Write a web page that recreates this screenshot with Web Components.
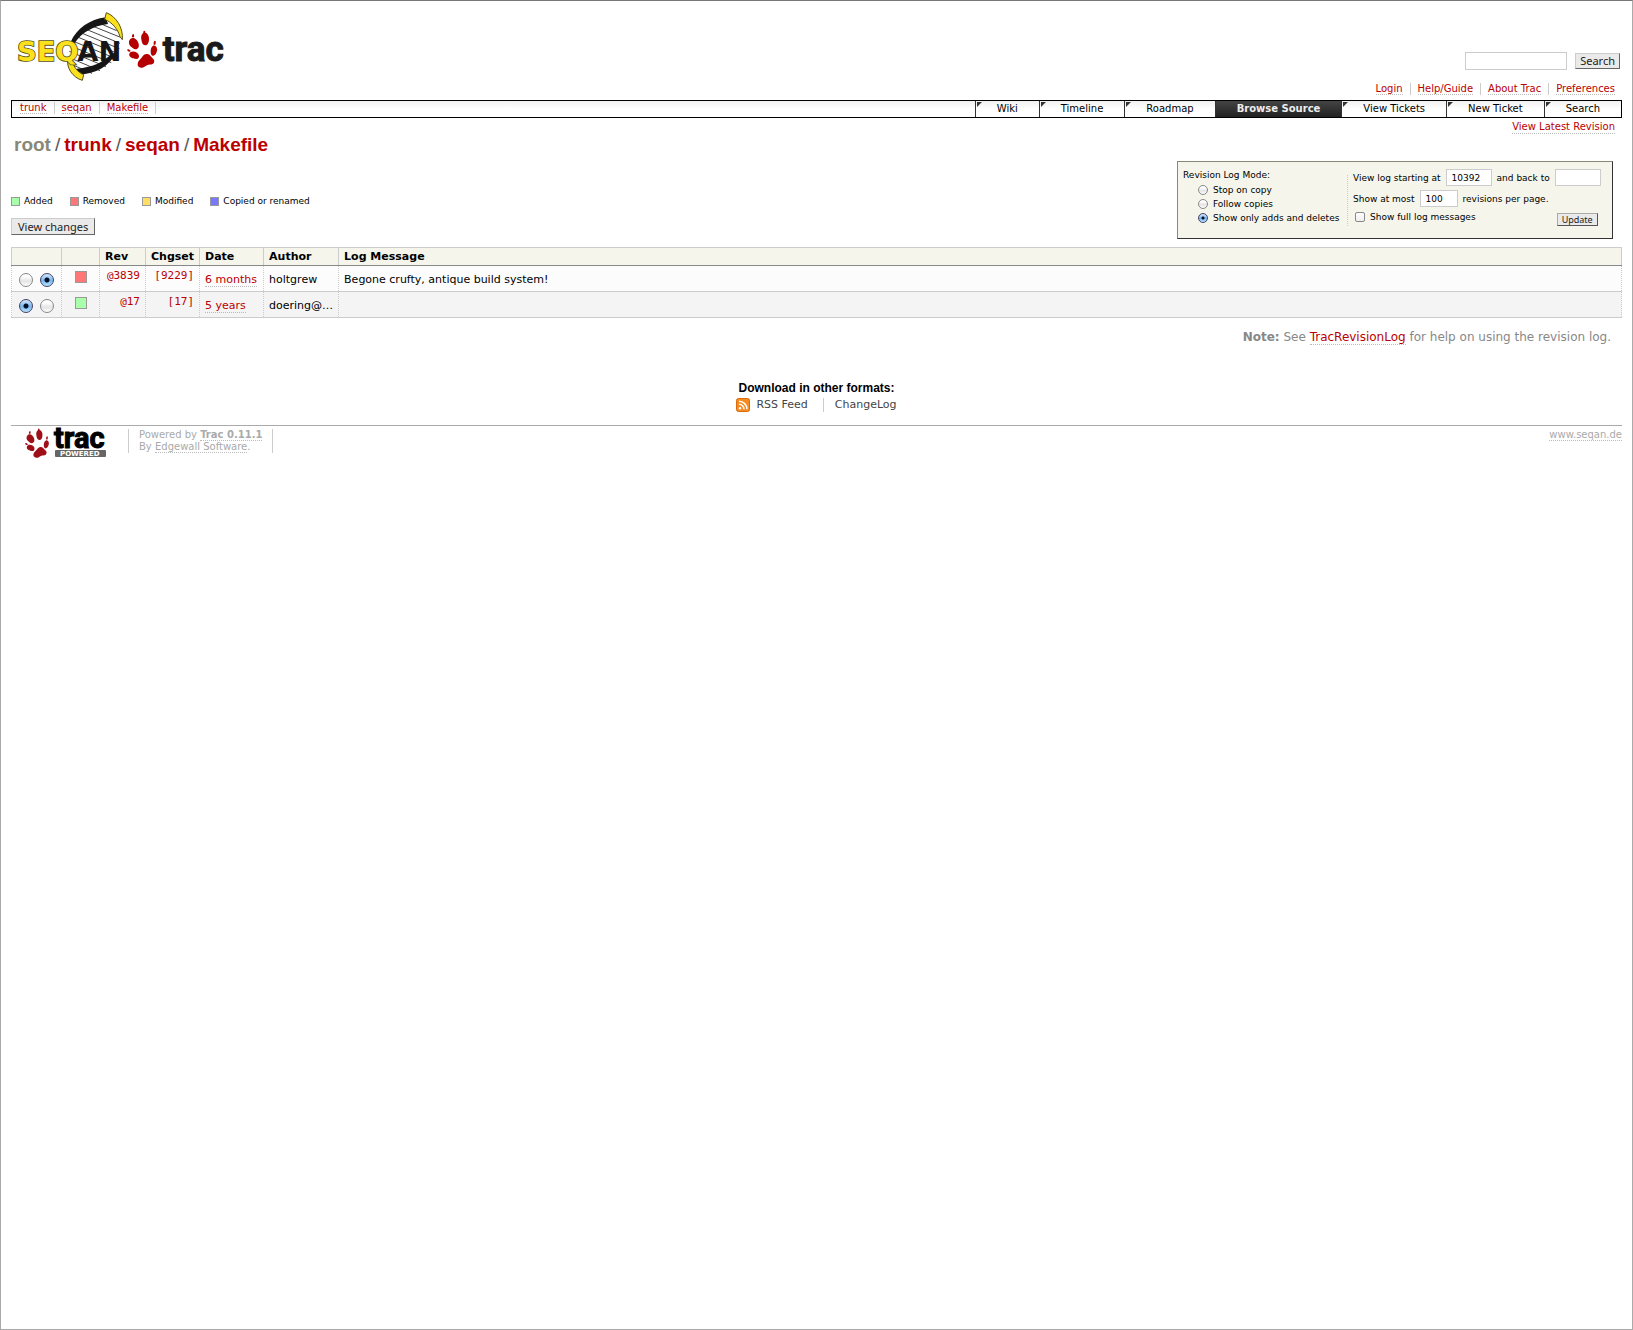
<!DOCTYPE html>
<html lang="en">
<head>
<meta charset="utf-8">
<title>Makefile (log) - SeqAn - Trac</title>
<style>
body { margin: 0; background: #fff; color: #000; font-family: Verdana, "DejaVu Sans", sans-serif; font-size: 11px; line-height: 14px; }
</style>
</head>
<body>
<trac-page>
  <page-banner slot="banner"></page-banner>
  <main-nav slot="nav"></main-nav>
  <log-heading slot="main"></log-heading>
  <log-tools slot="main"></log-tools>
  <revision-table slot="main"></revision-table>
  <help-note slot="main"></help-note>
  <alt-formats slot="main"></alt-formats>
  <page-footer slot="footer"></page-footer>
</trac-page>
<script>
const shared = `
  :host, * { box-sizing: border-box; }
  a { color: #b00; text-decoration: none; border-bottom: 1px dotted #bbb; }
  button { border: 1px solid; border-color: #ccc #666 #666 #ccc; background: #eaeaea; color: #222; padding: 0 6px; margin: 0; border-radius: 0; font: 11px/14px "Noto Sans", sans-serif; white-space: nowrap; }
  input { margin: 0; font: inherit; color: #000; }
  input[type=text] { border: 1px solid #ccc; background: #fff; border-radius: 0; padding: 0 5px; }
  input[type=radio] { appearance: none; flex: none; width: 10px; height: 10px; border: 1px solid #888; border-radius: 50%; background: linear-gradient(#fff 20%, #e4e4e4 60%, #fff); }
  input[type=radio]:checked { border-color: #446; background: radial-gradient(circle, #012 0 1px, transparent 2px), linear-gradient(#d4e8fc, #7ab4ee 55%, #b8e4ff); }
  ul { list-style: none; margin: 0; padding: 0; display: flex; }
`;
const paw = `<g class="paw">
  <path d="M387 130c-1-11 7-18 16-15 9 4 16 17 13 26-3 8-12 9-17 4-5-5-11-7-12-15z"/>
  <path d="M424 118c-2-12 3-20 10-20 9 0 14 10 13 22-1 11-6 17-12 16-7-1-10-8-11-18z"/>
  <path d="M452 154c0-10 6-19 12-17 7 2 9 11 6 19-3 9-9 13-13 11s-5-7-5-13z"/>
  <path d="M388 161c3-8 14-9 23-3 6 4 8 12 4 17-4 4-10 2-15 0-7-2-14-6-12-14z"/>
  <path d="M413 191c1-9 7-11 11-17 5-8 10-13 18-12 8 1 10 8 15 12 7 5 8 14 1 18-5 3-11 0-17 4-6 3-10 8-18 7-7-1-11-6-10-12z"/>
  <path d="M396 112c-1-5 2-10 4-10s3 5 2 10zM430 101c-1-5 0-9 3-9s4 4 3 9zM461 134c-1-6 1-12 4-12s3 6 1 12zM390 155c-5 1-9-3-8-6s6-1 10 3z"/>
</g>`;
const define = (name, css, html) => customElements.define(name, class extends HTMLElement {
  constructor() {
    super();
    this.attachShadow({ mode: 'open' }).innerHTML = `<style>${shared}${css}</style>${html}`;
  }
});

define('trac-page', `
  :host { display: block; min-height: 100vh; border: 1px solid #aaa; border-top-color: #777; padding: 0 10px; }
`, `<header><slot name="banner"></slot><slot name="nav"></slot></header>
<main><slot name="main"></slot></main>
<footer><slot name="footer"></slot></footer>`);

define('seqan-logo', `
  :host { display: block; }
  svg { display: block; width: 208px; height: 71px; overflow: visible; }
  .paw { fill: #b40000; }
  .word { font: bold 82px "DejaVu Sans", sans-serif; }
  .trac { font: bold 105px Roboto, sans-serif; fill: #1a1a1a; stroke: #1a1a1a; stroke-width: 3; }
`, `<svg viewBox="51 33 624 213" role="img" aria-label="SeqAn Trac">
  <path d="M316 54C270 62 232 88 217 124C202 154 204 186 216 206L240 222C285 218 320 196 344 158C362 128 366 104 352 86Z" fill="#fff"/>
  <path d="M290 66L350 92M272 76L362 112M254 86L360 130M242 98L358 146M230 110L352 160M220 124L344 174M212 138L334 188M208 154L318 200M206 172L300 212M212 192L276 220" stroke="#222" stroke-width="2.5"/>
  <path d="M318 52C268 58 230 86 212 126L224 130C244 98 278 78 324 72Z" fill="#161616"/>
  <path d="M236 224C288 222 328 198 348 160L336 160C312 186 280 202 230 206Z" fill="#161616"/>
  <path d="M319 38C350 50 370 84 367 119L360 110C353 86 336 67 314 58Z" fill="#fbe01c" stroke="#555116" stroke-width="3"/>
  <path d="M204 174C197 202 218 233 247 241L251 224C231 216 217 197 216 174Z" fill="#fbe01c" stroke="#555116" stroke-width="3"/>
  <text class="word" x="51" y="184" fill="#fbe01c" stroke="#555116" stroke-width="5" paint-order="stroke">SEQ</text>
  <text class="word" x="232" y="184" fill="#161616">AN</text>
  ${paw}
  <text class="trac" x="488" y="183">trac</text>
</svg>`);

define('page-banner', `
  :host { display: flex; justify-content: space-between; padding: 10px 0 0 6px; height: 99px; }
  .side { display: flex; flex-direction: column; align-items: flex-end; gap: 13px; padding-top: 41px; }
  form { display: flex; align-items: center; gap: 8px; padding-right: 2px; }
  form input[type=text] { width: 102px; height: 18px; }
  form button { padding: 0 4px; }
  ul { font-size: 10px; line-height: 12px; padding-right: 7px; }
  li { padding-left: 7px; margin-left: 7px; border-left: 1px solid #ccc; }
  li:first-child { border: 0; }
`, `<seqan-logo></seqan-logo>
<div class="side">
  <form onsubmit="return false"><input type="text" aria-label="Search"><button>Search</button></form>
  <nav aria-label="Account"><ul>
    <li><a href="#login">Login</a></li><li><a href="#guide">Help/Guide</a></li><li><a href="#about">About Trac</a></li><li><a href="#prefs">Preferences</a></li>
  </ul></nav>
</div>`);

define('main-nav', `
  :host { display: flex; justify-content: space-between; border: 1px solid #000; background: linear-gradient(#f0f0f0, #fff 50%); font-size: 10px; line-height: 16px; }
  .trail { line-height: 12px; padding: 1px 0 0 1px; }
  .trail li { padding: 0 7px; border-right: 1px solid #ccc; }
  .tabs a { display: block; border: 0; border-left: 1px solid #333; padding: 0 21px; color: #000; background: linear-gradient(135deg, #333 3px, transparent 4px) 1px 1px / 5px 5px no-repeat; }
  .tabs a.active { color: #eee; font-weight: bold; background: linear-gradient(#444, #222); }
`, `<nav aria-label="Path"><ul class="trail"><li><a href="#trunk">trunk</a></li><li><a href="#seqan">seqan</a></li><li><a href="#makefile">Makefile</a></li></ul></nav>
<nav aria-label="Main"><ul class="tabs">
  <li><a href="#wiki">Wiki</a></li><li><a href="#timeline">Timeline</a></li><li><a href="#roadmap">Roadmap</a></li><li><a href="#browser" class="active">Browse Source</a></li><li><a href="#tickets">View Tickets</a></li><li><a href="#new">New Ticket</a></li><li><a href="#search">Search</a></li>
</ul></nav>`);

define('log-heading', `
  :host { display: block; }
  nav { display: flex; justify-content: flex-end; padding: 3px 7px 0 0; font-size: 10px; line-height: 12px; }
  h1 { margin: 0; padding-left: 3px; display: flex; gap: 4px; font: bold 19px/22px Arial, "Liberation Sans", sans-serif; color: #555; }
  h1 a { border: 0; }
  .sep { font-weight: normal; }
  .root { color: #887; }
`, `<nav aria-label="Context"><a href="#latest">View Latest Revision</a></nav>
<h1><a class="root" href="#root">root</a><span class="sep">/</span><a href="#trunk">trunk</a><span class="sep">/</span><a href="#seqan">seqan</a><span class="sep">/</span><a href="#makefile">Makefile</a></h1>`);

define('log-tools', `
  :host { display: flex; justify-content: space-between; align-items: flex-start; padding: 5px 9px 0 0; }
  .left { display: flex; flex-direction: column; align-items: flex-start; gap: 11px; padding-top: 34px; }
  .legend { gap: 17px; font-size: 9px; line-height: 12px; }
  .legend li { display: flex; align-items: center; gap: 4px; }
  .legend i { width: 9px; height: 9px; border: 1px solid #999; }
  .left button { line-height: 15px; }
  form { display: flex; width: 436px; height: 78px; padding: 7px 12px 12px 5px; border: 1px solid; border-color: #887 #333 #333 #887; background: #f5f5eb; font-size: 9px; line-height: 12px; }
  fieldset { border: 0; margin: 0; padding: 0; min-width: 0; }
  legend { padding: 0; }
  .mode { flex: none; width: 165px; border-right: 1px dotted #ccc; }
  .mode div { padding: 3px 0 0 15px; display: flex; flex-direction: column; gap: 2px; white-space: nowrap; }
  .mode label { display: flex; align-items: center; gap: 5px; }
  .range { flex: 1; padding-left: 5px; display: flex; flex-direction: column; gap: 4px; white-space: nowrap; }
  .row { display: flex; align-items: center; gap: 5px; }
  .row input[type=text] { width: 46px; height: 17px; }
  .row input.short { width: 38px; }
  .last { height: 16px; justify-content: space-between; align-items: flex-start; }
  .last label { display: flex; align-items: center; gap: 5px; }
  input[type=checkbox] { appearance: none; width: 10px; height: 10px; margin-left: 2px; border: 1px solid #888; border-radius: 2px; background: linear-gradient(#fff, #eee); }
  .last button { align-self: flex-end; font-size: 9px; line-height: 11px; padding: 0 4px; margin-right: 3px; border-color: #aaa #555 #555 #aaa; }
`, `<div class="left">
  <ul class="legend">
    <li><i style="background:#afa"></i>Added</li><li><i style="background:#f77"></i>Removed</li><li><i style="background:#fd6"></i>Modified</li><li><i style="background:#77f"></i>Copied or renamed</li>
  </ul>
  <button type="button">View changes</button>
</div>
<form onsubmit="return false">
  <fieldset class="mode"><legend>Revision Log Mode:</legend>
    <div>
      <label><input type="radio" name="mode">Stop on copy</label>
      <label><input type="radio" name="mode">Follow copies</label>
      <label><input type="radio" name="mode" checked>Show only adds and deletes</label>
    </div>
  </fieldset>
  <div class="range">
    <div class="row"><label for="from">View log starting at</label><input type="text" id="from" value="10392"><label for="to">and back to</label><input type="text" id="to"></div>
    <div class="row"><label for="limit">Show at most</label><input type="text" class="short" id="limit" value="100"><span>revisions per page.</span></div>
    <div class="row last"><label><input type="checkbox">Show full log messages</label><button>Update</button></div>
  </div>
</form>`);

define('revision-table', `
  :host { display: block; padding-top: 8px; }
  table { width: 100%; border-collapse: collapse; font-size: 11px; line-height: 14px; }
  th { text-align: left; background: #f5f5eb; border: 1px solid #ccc; border-bottom-color: #888; padding: 2px 5px 1px; height: 18px; }
  td { border: 1px solid #ccc; border-left: 1px dotted #ccc; border-right: 1px dotted #ccc; padding: 2px 5px 0; height: 26px; white-space: nowrap; background: #fcfcfc; }
  tr:last-child td { background: #f4f4f4; }
  .diff { width: 50px; } .change { width: 38px; } .rev { width: 46px; } .set { width: 54px; } .age { width: 64px; } .author { width: 74px; }
  .pair { display: flex; gap: 7px; padding: 4px 2px; }
  .pair input { width: 14px; height: 14px; }
  .pair input:checked { background: radial-gradient(circle, #012 0 2px, transparent 3px), linear-gradient(#d4e8fc, #7ab4ee 55%, #b8e4ff); }
  .mono { font-family: "DejaVu Sans Mono", monospace; text-align: right; vertical-align: top; }
  .mono a { border: 0; }
  td.mono { padding-top: 3px; }
  td.change { vertical-align: top; padding-top: 5px; }
  td.change i { display: block; width: 12px; height: 12px; margin: 0 auto; border: 1px solid #999; }
`, `<table>
  <thead><tr><th class="diff"></th><th class="change"></th><th class="rev">Rev</th><th class="set">Chgset</th><th class="age">Date</th><th class="author">Author</th><th>Log Message</th></tr></thead>
  <tbody>
    <tr><td><div class="pair"><input type="radio" name="old" aria-label="From 3839"><input type="radio" name="new" aria-label="To 3839" checked></div></td><td class="change"><i style="background:#f77"></i></td><td class="mono"><a href="#r3839">@3839</a></td><td class="mono"><a href="#c9229">[9229]</a></td><td><a href="#t1">6 months</a></td><td>holtgrew</td><td>Begone crufty, antique build system!</td></tr>
    <tr><td><div class="pair"><input type="radio" name="old" aria-label="From 17" checked><input type="radio" name="new" aria-label="To 17"></div></td><td class="change"><i style="background:#afa"></i></td><td class="mono"><a href="#r17">@17</a></td><td class="mono"><a href="#c17">[17]</a></td><td><a href="#t2">5 years</a></td><td>doering@…</td><td></td></tr>
  </tbody>
</table>`);

define('help-note', `
  :host { display: block; padding: 11px 11px 0 0; text-align: right; font-size: 12px; line-height: 16px; color: #888; }
  p { margin: 0; }
`, `<p><strong>Note:</strong> See <a href="#help">TracRevisionLog</a> for help on using the revision log.</p>`);

define('alt-formats', `
  :host { display: flex; flex-direction: column; align-items: center; padding: 35px 0 13px; }
  h3 { margin: 0; font: bold 12px/16px Arial, "Liberation Sans", sans-serif; }
  ul { line-height: 14px; padding-top: 2px; }
  li + li { border-left: 1px solid #ccc; margin-left: 15px; padding-left: 11px; }
  a { color: #444; border: 0; display: flex; align-items: center; gap: 6px; }
  svg { width: 14px; height: 14px; }
`, `<h3>Download in other formats:</h3>
<ul><li><a href="#rss"><svg viewBox="0 0 14 14" aria-hidden="true"><rect x=".5" y=".5" width="13" height="13" rx="2" fill="#f68b1f" stroke="#d96b10"/><circle cx="4" cy="10.3" r="1.2" fill="#fff"/><path d="M3 6.2a5 5 0 0 1 5 5M3 3.3a8 8 0 0 1 8 8" fill="none" stroke="#fff" stroke-width="1.5"/></svg>RSS Feed</a></li><li><a href="#changelog">ChangeLog</a></li></ul>`);

define('page-footer', `
  :host { display: flex; align-items: flex-start; border-top: 1px solid #aaa; padding-top: 3px; font-size: 10px; line-height: 12px; color: #aaa; }
  a { color: #aaa; }
  p { margin: 0; }
  .logo { border: 0; margin: 0 22px 0 13px; }
  svg { display: block; width: 82px; height: 30px; overflow: visible; }
  .paw { fill: #9f0f17; }
  .trac { font: bold 29px Roboto, sans-serif; stroke: #000; }
  .powered { font: bold 7px "DejaVu Sans", sans-serif; fill: #fff; }
  .by { padding: 0 10px; border: 1px solid #ccc; border-width: 0 1px; }
  .site { margin-left: auto; }
`, `<a class="logo" href="#trac"><svg viewBox="24 429 82 30" role="img" aria-label="Trac Powered">
  <g transform="translate(-76 404) scale(.265)">${paw}</g>
  <text class="trac" x="54" y="448">trac</text>
  <rect x="55" y="450" width="51" height="7" rx="1" fill="#666"/><text class="powered" x="60" y="456">POWERED</text>
</svg></a>
<p class="by">Powered by <a href="#about"><strong>Trac 0.11.1</strong></a><br>By <a href="#edgewall">Edgewall Software</a>.</p>
<p class="site"><a href="#site">www.seqan.de</a></p>`);
</script>
</body>
</html>
